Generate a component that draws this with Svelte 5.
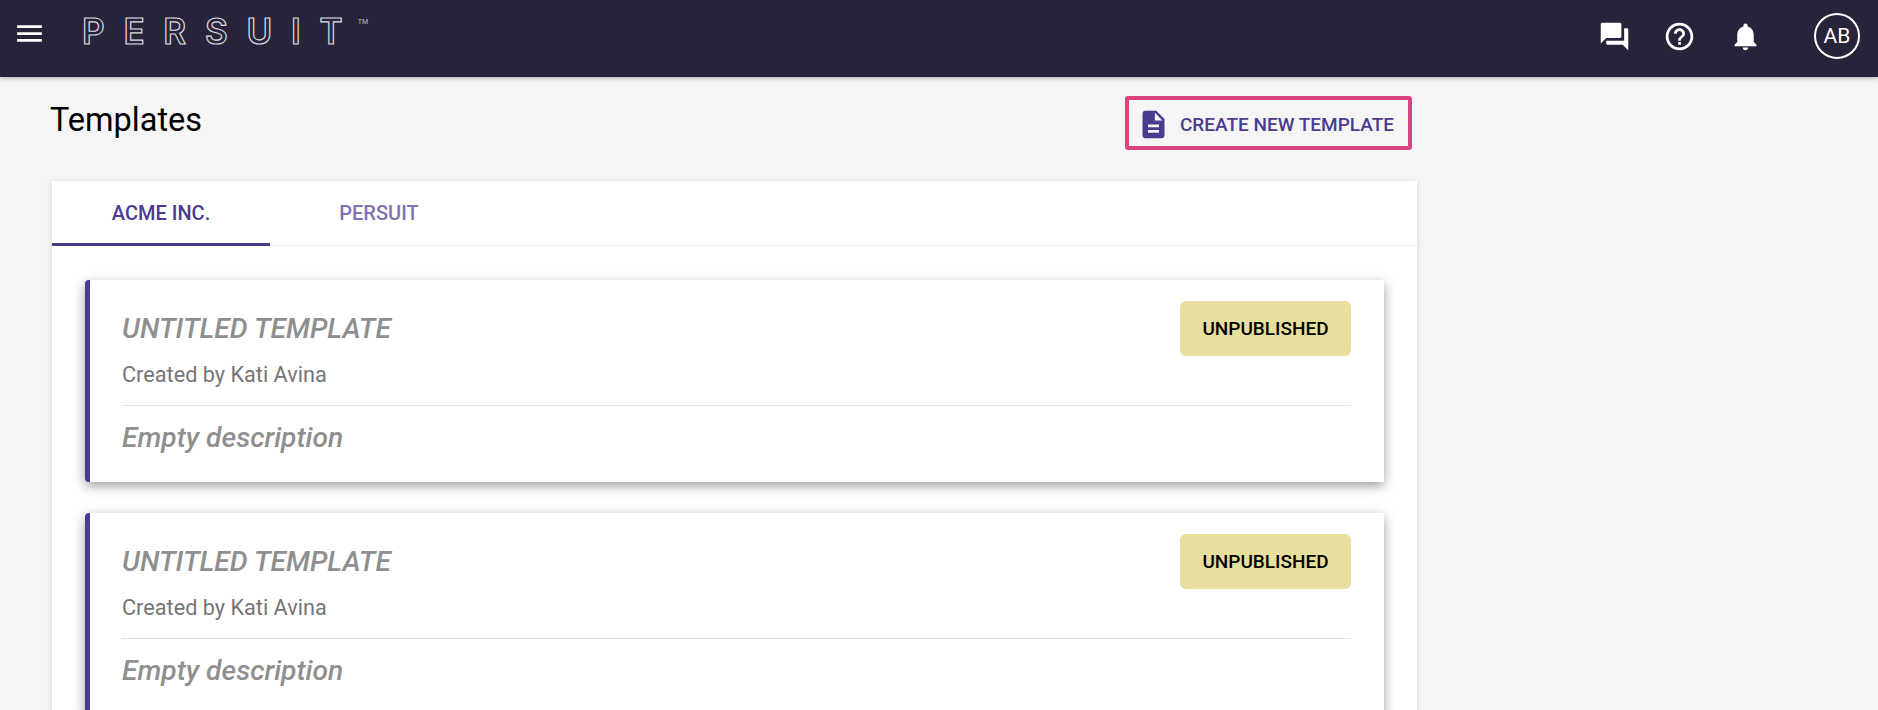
<script>
    const templates = [
        { title: "UNTITLED TEMPLATE", author: "Kati Avina", description: "Empty description", status: "UNPUBLISHED" },
        { title: "UNTITLED TEMPLATE", author: "Kati Avina", description: "Empty description", status: "UNPUBLISHED" }
    ];
</script>

<div class="page">
    <header class="topbar">
        <svg class="menu-icon" viewBox="0 0 24 24"><path d="M3 18h18v-2H3v2zm0-5h18v-2H3v2zm0-7v2h18V6H3z" /></svg>
        <div class="logo">PERSUI<span class="logo-last">T</span></div>
        <span class="tm">TM</span>

        <div class="actions">
            <svg class="action-icon" viewBox="0 0 24 24"><path d="M21 6h-2v9H6v2c0 .55.45 1 1 1h11l4 4V7c0-.55-.45-1-1-1zm-4 6V3c0-.55-.45-1-1-1H3c-.55 0-1 .45-1 1v14l4-4h10c.55 0 1-.45 1-1z" /></svg>
            <svg class="action-icon" viewBox="0 0 24 24"><path d="M11 18h2v-2h-2v2zm1-16C6.48 2 2 6.48 2 12s4.48 10 10 10 10-4.48 10-10S17.52 2 12 2zm0 18c-4.41 0-8-3.59-8-8s3.59-8 8-8 8 3.59 8 8-3.59 8-8 8zm0-14c-2.21 0-4 1.79-4 4h2c0-1.1.9-2 2-2s2 .9 2 2c0 2-3 1.75-3 5h2c0-2.25 3-2.5 3-5 0-2.21-1.79-4-4-4z" /></svg>
            <svg class="action-icon" viewBox="0 0 24 24"><path d="M12 22c1.1 0 2-.9 2-2h-4c0 1.1.89 2 2 2zm6-6v-5c0-3.07-1.64-5.64-4.5-6.32V4c0-.83-.67-1.5-1.5-1.5s-1.5.67-1.5 1.5v.68C7.63 5.36 6 7.92 6 11v5l-2 2v1h16v-1l-2-2z" /></svg>
            <div class="avatar">AB</div>
        </div>
    </header>

    <main class="content">
        <div class="title-row">
            <h1>Templates</h1>
            <button class="create-btn">
                <svg viewBox="0 0 24 24"><path d="M14 2H6c-1.1 0-1.99.9-1.99 2L4 20c0 1.1.89 2 1.99 2H18c1.1 0 2-.9 2-2V8l-6-6zm2 16H8v-2h8v2zm0-4H8v-2h8v2zm-3-5V3.5L18.5 9H13z" /></svg>
                CREATE NEW TEMPLATE
            </button>
        </div>

        <section class="panel">
            <div class="tabs">
                <div class="tab active">ACME INC.</div>
                <div class="tab">PERSUIT</div>
            </div>

            <div class="list">
                {#each templates as t}
                    <article class="card">
                        <div class="card-top">
                            <div>
                                <div class="card-title">{t.title}</div>
                                <div class="card-author">Created by {t.author}</div>
                            </div>
                            <span class="status">{t.status}</span>
                        </div>
                        <div class="card-desc">{t.description}</div>
                    </article>
                {/each}
            </div>
        </section>
    </main>
</div>

<style>
    :global(body) {
        margin: 0;
        background: #f5f5f5;
        font-family: Roboto, "Liberation Sans", sans-serif;
    }

    .page {
        height: 100vh;
        overflow: hidden;
    }

    .topbar {
        display: flex;
        align-items: center;
        height: 77px;
        padding: 0 18px 0 13px;
        background: #27233a;
        box-shadow: 0 1px 5px rgba(0, 0, 0, 0.3);
        position: relative;
    }

    .menu-icon {
        width: 33px;
        height: 33px;
        fill: #fff;
        margin-top: -10px;
    }

    .logo {
        margin-left: 36px;
        margin-top: -15px;
        font-family: Inter, Roboto, sans-serif;
        font-size: 35px;
        line-height: 1;
        font-weight: 600;
        letter-spacing: 18.8px;
        color: transparent;
        -webkit-text-stroke: 1.2px #dcdbe0;
    }

    .logo-last {
        letter-spacing: 0;
    }

    .tm {
        align-self: flex-start;
        margin: 19px 0 0 15px;
        font-size: 7px;
        line-height: 1;
        color: #bbbbc2;
    }

    .actions {
        display: flex;
        align-items: center;
        gap: 32.5px;
        margin-left: auto;
        margin-top: -5px;
    }

    .action-icon {
        width: 33px;
        height: 33px;
        fill: #fff;
    }

    .avatar {
        width: 42px;
        height: 42px;
        margin-left: 20px;
        border: 2px solid #fff;
        border-radius: 50%;
        display: flex;
        align-items: center;
        justify-content: center;
        color: #fff;
        font-size: 21px;
    }

    .content {
        width: 1365px;
        margin-left: 52px;
    }

    .title-row {
        display: flex;
        justify-content: space-between;
        align-items: flex-start;
        height: 104px;
        padding-right: 5px;
    }

    h1 {
        margin: 23px 0 0 -2px;
        font-size: 32.5px;
        font-weight: 400;
        line-height: 40px;
        color: #000;
    }

    .create-btn {
        display: flex;
        align-items: center;
        gap: 10px;
        height: 54px;
        margin-top: 19px;
        padding: 2px 14px 0 8px;
        border: 4px solid #da4480;
        border-radius: 3px;
        background: transparent;
        color: #4a3b8f;
        font-family: inherit;
        font-size: 19px;
        font-weight: 500;
    }

    .create-btn svg {
        width: 33px;
        height: 33px;
        fill: #4a3b8f;
    }

    .panel {
        background: #fff;
        box-shadow: 0 1px 6px rgba(0, 0, 0, 0.14);
        height: 600px;
    }

    .tabs {
        display: flex;
        box-sizing: border-box;
        height: 65px;
        border-bottom: 1px solid #eeeeee;
    }

    .tab {
        width: 218px;
        height: 65px;
        box-sizing: border-box;
        padding-top: 20px;
        text-align: center;
        font-size: 20px;
        font-weight: 500;
        color: #7f72b3;
    }

    .tab.active {
        color: #4a3b8f;
        border-bottom: 3px solid #4a3b8f;
    }

    .list {
        display: flex;
        flex-direction: column;
        gap: 31px;
        padding: 34px 33px 0 33px;
    }

    .card {
        height: 202px;
        box-sizing: border-box;
        padding: 21px 33px 0 32px;
        background: #fff;
        border-left: 5px solid #4a3b8f;
        border-radius: 4px 0 0 4px;
        box-shadow: 0 4px 12px rgba(0, 0, 0, 0.38);
    }

    .card-top {
        display: flex;
        justify-content: space-between;
        align-items: flex-start;
        height: 104px;
        border-bottom: 1px solid #e4e4e4;
    }

    .card-title {
        margin-top: 10px;
        font-size: 28.2px;
        line-height: 36px;
        font-style: italic;
        font-weight: 500;
        color: #8f8f8f;
    }

    .card-author {
        margin-top: 16px;
        font-size: 21.7px;
        line-height: 24px;
        color: #757575;
    }

    .status {
        width: 171px;
        height: 55px;
        display: flex;
        align-items: center;
        justify-content: center;
        background: #e6df9e;
        border-radius: 6px;
        font-size: 19px;
        font-weight: 500;
        color: #000;
    }

    .card-desc {
        margin-top: 14px;
        font-size: 28.2px;
        line-height: 36px;
        font-style: italic;
        font-weight: 500;
        color: #8f8f8f;
    }
</style>
